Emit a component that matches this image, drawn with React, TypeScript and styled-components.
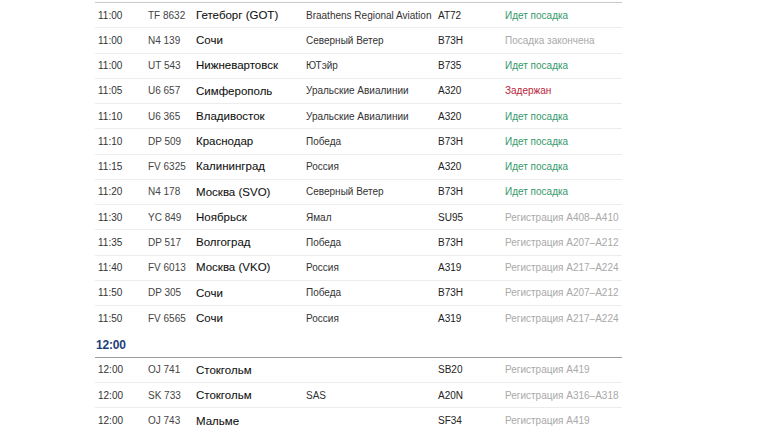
import React from "react";
import styled, { createGlobalStyle } from "styled-components";

const Global = createGlobalStyle`
  html, body { margin: 0; padding: 0; background: #fff; }
  body { font-family: "Liberation Sans", Arial, Helvetica, sans-serif; overflow: hidden; }
`;

type Status = "boarding" | "closed" | "delayed" | "checkin";

interface Flight {
  time: string;
  flight: string;
  city: string;
  airline: string;
  aircraft: string;
  status: string;
  kind: Status;
}

const early: Flight[] = [
  { time: "11:00", flight: "TF 8632", city: "Гетеборг (GOT)", airline: "Braathens Regional Aviation", aircraft: "AT72", status: "Идет посадка", kind: "boarding" },
  { time: "11:00", flight: "N4 139", city: "Сочи", airline: "Северный Ветер", aircraft: "B73H", status: "Посадка закончена", kind: "closed" },
  { time: "11:00", flight: "UT 543", city: "Нижневартовск", airline: "ЮТэйр", aircraft: "B735", status: "Идет посадка", kind: "boarding" },
  { time: "11:05", flight: "U6 657", city: "Симферополь", airline: "Уральские Авиалинии", aircraft: "A320", status: "Задержан", kind: "delayed" },
  { time: "11:10", flight: "U6 365", city: "Владивосток", airline: "Уральские Авиалинии", aircraft: "A320", status: "Идет посадка", kind: "boarding" },
  { time: "11:10", flight: "DP 509", city: "Краснодар", airline: "Победа", aircraft: "B73H", status: "Идет посадка", kind: "boarding" },
  { time: "11:15", flight: "FV 6325", city: "Калининград", airline: "Россия", aircraft: "A320", status: "Идет посадка", kind: "boarding" },
  { time: "11:20", flight: "N4 178", city: "Москва (SVO)", airline: "Северный Ветер", aircraft: "B73H", status: "Идет посадка", kind: "boarding" },
  { time: "11:30", flight: "YC 849", city: "Ноябрьск", airline: "Ямал", aircraft: "SU95", status: "Регистрация A408–A410", kind: "checkin" },
  { time: "11:35", flight: "DP 517", city: "Волгоград", airline: "Победа", aircraft: "B73H", status: "Регистрация A207–A212", kind: "checkin" },
  { time: "11:40", flight: "FV 6013", city: "Москва (VKO)", airline: "Россия", aircraft: "A319", status: "Регистрация A217–A224", kind: "checkin" },
  { time: "11:50", flight: "DP 305", city: "Сочи", airline: "Победа", aircraft: "B73H", status: "Регистрация A207–A212", kind: "checkin" },
  { time: "11:50", flight: "FV 6565", city: "Сочи", airline: "Россия", aircraft: "A319", status: "Регистрация A217–A224", kind: "checkin" },
];

const noon: Flight[] = [
  { time: "12:00", flight: "OJ 741", city: "Стокгольм", airline: "", aircraft: "SB20", status: "Регистрация A419", kind: "checkin" },
  { time: "12:00", flight: "SK 733", city: "Стокгольм", airline: "SAS", aircraft: "A20N", status: "Регистрация A316–A318", kind: "checkin" },
  { time: "12:00", flight: "OJ 743", city: "Мальме", airline: "", aircraft: "SF34", status: "Регистрация A419", kind: "checkin" },
];

const statusColor: Record<Status, string> = {
  boarding: "#35996a",
  closed: "#a9a9a9",
  delayed: "#b91d3a",
  checkin: "#a9a9a9",
};

const Board = styled.div`
  width: 527px;
  margin-left: 95px;
  border-top: 1px solid #c9c9c9;
  margin-top: 2px;
`;

const Section = styled.div`
  display: flex;
  flex-direction: column;
`;

const Row = styled.div`
  display: grid;
  grid-template-columns: 50px 48px 110px 132px 67px 1fr;
  align-items: center;
  height: 25.25px;
  padding-top: 1px;
  box-sizing: border-box;
  border-bottom: 1px solid #ececec;
  &:last-child { border-bottom: none; }
`;

const Cell = styled.div<{ $color?: string }>`
  padding-left: 3px;
  white-space: nowrap;
  font-size: 10px;
  color: ${(p) => p.$color ?? "#333"};
  line-height: 1;
`;

const City = styled(Cell)`
  font-size: 11.5px;
  color: #111;
  -webkit-text-stroke: 0.08px #111;
`;

const HourHeader = styled.div`
  height: 26.5px;
  box-sizing: border-box;
  display: flex;
  align-items: center;
  padding-left: 1px;
  padding-top: 2px;
  border-bottom: 1px solid #9d9d9d;
  color: #1d3f79;
  font-size: 12px;
  font-weight: bold;
  letter-spacing: -0.2px;
`;

const FlightRow = ({ f }: { f: Flight }) => (
  <Row>
    <Cell $color="#333">{f.time}</Cell>
    <Cell $color="#444">{f.flight}</Cell>
    <City>{f.city}</City>
    <Cell $color="#333">{f.airline}</Cell>
    <Cell $color="#222">{f.aircraft}</Cell>
    <Cell $color={statusColor[f.kind]}>{f.status}</Cell>
  </Row>
);

export default function App() {
  return (
    <>
      <Global />
      <Board>
        <Section>
          {early.map((f, i) => (
            <FlightRow key={i} f={f} />
          ))}
        </Section>
        <HourHeader>12:00</HourHeader>
        <Section>
          {noon.map((f, i) => (
            <FlightRow key={i} f={f} />
          ))}
        </Section>
      </Board>
    </>
  );
}
